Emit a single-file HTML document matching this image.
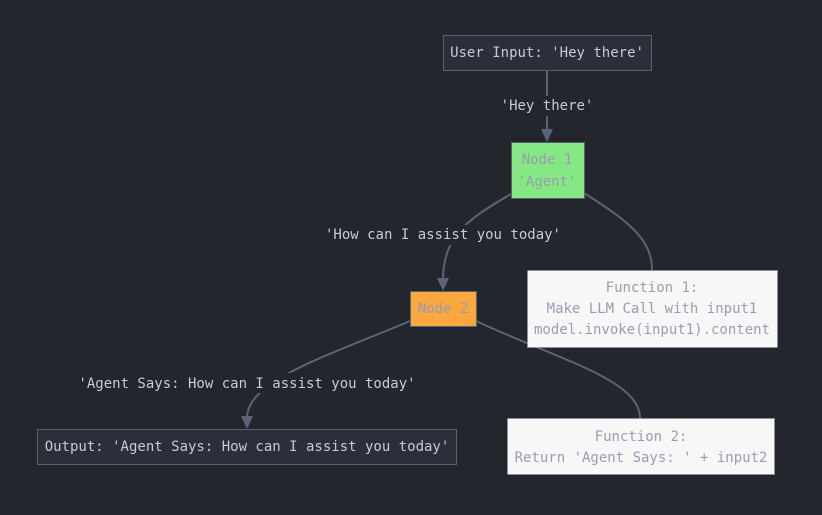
<!DOCTYPE html>
<html><head><meta charset="utf-8"><style>
html,body{margin:0;padding:0;background:#24262e;width:822px;height:515px;overflow:hidden}
text{font-family:"DejaVu Sans Mono","Liberation Mono",monospace;font-size:14px;text-anchor:middle}
</style></head><body>
<svg width="822" height="515" xmlns="http://www.w3.org/2000/svg">
<rect width="822" height="515" fill="#24262e"/>
<g fill="none" stroke="#5b6376" stroke-width="2">
<path d="M547 71 V132"/>
<path d="M511 194 C470 218 443 235 443 280"/>
<path d="M584 193 C630 222 652 240 652 270"/>
<path d="M410 321 C330 355 247 380 247 418"/>
<path d="M476 321 C560 360 640 380 640 418"/>
</g>
<g fill="#5b6376">
<path d="M541 129 L553 129 L547 142 Z"/>
<path d="M437 278 L449 278 L443 291 Z"/>
<path d="M241 416 L253 416 L247 429 Z"/>
</g>
<rect x="497" y="96" width="100" height="20" fill="#24262e"/>
<text x="547" y="110" fill="#c8cbd4">'Hey there'</text>
<rect x="326" y="225" width="236" height="20" fill="#24262e"/>
<text x="443" y="239" fill="#c8cbd4">'How can I assist you today'</text>
<rect x="78" y="373" width="338" height="20" fill="#24262e"/>
<text x="247" y="388" fill="#c8cbd4">'Agent Says: How can I assist you today'</text>
<rect x="443.5" y="35.5" width="208" height="35" fill="#2c2f39" stroke="#5a6070"/>
<text x="547" y="57" fill="#c8cbd4">User Input: 'Hey there'</text>
<rect x="511.5" y="142.5" width="73" height="56" fill="#85e885" stroke="#5a6070"/>
<text x="547" y="164" fill="#9a9cb0">Node 1</text>
<text x="547" y="186" fill="#9a9cb0">'Agent'</text>
<rect x="410.5" y="291.5" width="66" height="35" fill="#f9a73e" stroke="#5a6070"/>
<text x="443" y="313" fill="#9a9cb0">Node 2</text>
<rect x="527.5" y="270.5" width="250" height="77" fill="#f7f7f7" stroke="#8a909c" stroke-dasharray="5,3"/>
<text x="652" y="292" fill="#9a9cb0">Function 1:</text>
<text x="652" y="313" fill="#9a9cb0">Make LLM Call with input1</text>
<text x="652" y="334" fill="#9a9cb0">model.invoke(input1).content</text>
<rect x="37.5" y="429.5" width="419" height="35" fill="#2c2f39" stroke="#5a6070"/>
<text x="247" y="451" fill="#c8cbd4">Output: 'Agent Says: How can I assist you today'</text>
<rect x="507.5" y="418.5" width="267" height="56" fill="#f7f7f7" stroke="#8a909c" stroke-dasharray="5,3"/>
<text x="641" y="441" fill="#9a9cb0">Function 2:</text>
<text x="641" y="462" fill="#9a9cb0">Return 'Agent Says: ' + input2</text>
</svg>
</body></html>
